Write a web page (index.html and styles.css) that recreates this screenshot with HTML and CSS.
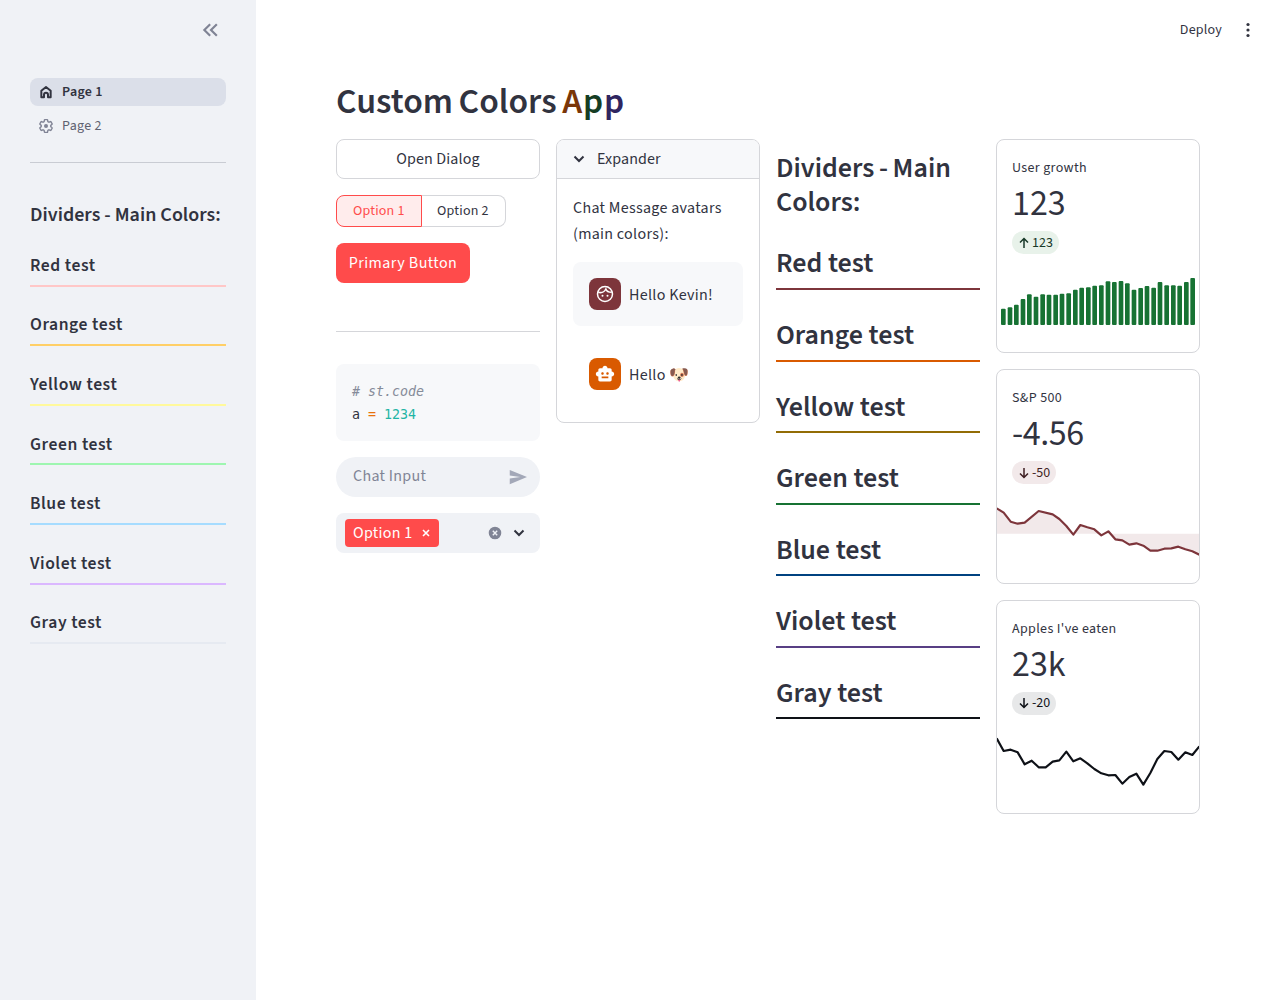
FILE: index.html
```html
<!DOCTYPE html>
<html lang="en">
<head>
    <meta charset="UTF-8">
    <meta name="viewport" content="width=device-width, initial-scale=1.0">
    <title>Custom Colors App</title>
    <link rel="stylesheet" href="styles.css">
</head>
<body>
    <aside class="sidebar">
        <div class="sidebar-top">
            <svg class="collapse-icon" viewBox="0 0 24 24"><path d="M11 5l-7 7 7 7M19 5l-7 7 7 7"/></svg>
        </div>
        <nav class="nav">
            <a class="nav-item active">
                <svg class="nav-icon" viewBox="0 0 24 24"><path class="home" d="M5 20V10l7-5.500L19 10v10h-4v-4a3 3 0 0 0-6 0v4z"/></svg>
                <span>Page 1</span>
            </a>
            <a class="nav-item">
                <svg class="nav-icon" viewBox="0 0 24 24">
                    <path class="gear" d="M19.140 12.940c.04-.3.06-.61.06-.94 0-.32-.02-.64-.07-.94l2.030-1.580c.18-.14.23-.41.12-.61l-1.920-3.320c-.12-.22-.37-.29-.59-.22l-2.390.96c-.5-.38-1.030-.7-1.620-.94l-.36-2.540c-.04-.24-.24-.41-.48-.41h-3.840c-.24 0-.43.17-.47.41l-.36 2.540c-.59.24-1.130.57-1.620.94l-2.390-.96c-.22-.08-.47 0-.59.22L2.740 8.870c-.12.21-.08.47.12.61l2.030 1.580c-.05.3-.09.63-.09.94s.02.64.07.94l-2.030 1.580c-.18.14-.23.41-.12.61l1.920 3.320c.12.22.37.29.59.22l2.390-.96c.5.38 1.030.7 1.620.94l.36 2.540c.05.24.24.41.48.41h3.840c.24 0 .44-.17.47-.41l.36-2.540c.59-.24 1.130-.56 1.620-.94l2.390.96c.22.08.47 0 .59-.22l1.920-3.320c.12-.22.07-.47-.12-.61l-2.010-1.580z"/>
                    <circle class="gear-dot" cx="12" cy="12" r="3"/>
                </svg>
                <span>Page 2</span>
            </a>
        </nav>
        <hr class="sidebar-rule">
        <h3 class="side-title">Dividers - Main Colors:</h3>
        <div class="side-div side-red">Red test</div>
        <div class="side-div side-orange">Orange test</div>
        <div class="side-div side-yellow">Yellow test</div>
        <div class="side-div side-green">Green test</div>
        <div class="side-div side-blue">Blue test</div>
        <div class="side-div side-violet">Violet test</div>
        <div class="side-div side-gray">Gray test</div>
    </aside>

    <main class="main">
        <header class="toolbar">
            <span class="deploy">Deploy</span>
            <svg class="more-icon" viewBox="0 0 4 16"><circle cx="2" cy="2.500" r="1.600"/><circle cx="2" cy="8" r="1.600"/><circle cx="2" cy="13.500" r="1.600"/></svg>
        </header>

        <div class="content">
            <h1 class="title">Custom Colors <span class="c-a">A</span><span class="c-p1">p</span><span class="c-p2">p</span></h1>

            <div class="columns">
                <section class="col">
                    <button class="btn">Open Dialog</button>
                    <div class="segmented">
                        <span class="seg seg-on">Option 1</span>
                        <span class="seg">Option 2</span>
                    </div>
                    <button class="btn-primary">Primary Button</button>
                    <hr class="col-rule">
                    <pre class="code"><span class="code-comment"># st.code</span>
a <span class="code-op">=</span> <span class="code-num">1234</span></pre>
                    <div class="chat-input">
                        <span class="chat-text">Chat Input</span>
                        <svg class="send-icon" viewBox="0 0 24 24"><path d="M1 21.500L24 12 1 2.500v7.500l14 2-14 2z"/></svg>
                    </div>
                    <div class="multiselect">
                        <span class="tag">Option 1 <svg class="tag-x" viewBox="0 0 10 10"><path d="M2 2l6 6M8 2l-6 6"/></svg></span>
                        <span class="ms-icons">
                            <svg class="clear-icon" viewBox="0 0 14 14"><circle cx="7" cy="7" r="7"/><path d="M4.800 4.800l4.400 4.400M9.200 4.800l-4.400 4.400"/></svg>
                            <svg class="chev-icon" viewBox="0 0 12 8"><path d="M1.500 1.500L6 6l4.500-4.500"/></svg>
                        </span>
                    </div>
                </section>

                <section class="col">
                    <div class="expander">
                        <div class="exp-head">
                            <svg class="chev-icon" viewBox="0 0 12 8"><path d="M1.500 1.500L6 6l4.500-4.500"/></svg>
                            <span>Expander</span>
                        </div>
                        <div class="exp-body">
                            <p class="exp-text">Chat Message avatars<br>(main colors):</p>
                            <div class="msg msg-user">
                                <span class="avatar avatar-red">
                                    <svg viewBox="0 0 24 24" class="face"><circle cx="12" cy="12" r="9"/><path d="M4 10c4 1 7 0 9-4 1 3 4 4 7 4"/><circle class="eye" cx="9" cy="14" r="1.200"/><circle class="eye" cx="15" cy="14" r="1.200"/></svg>
                                </span>
                                <span class="msg-text">Hello Kevin!</span>
                            </div>
                            <div class="msg">
                                <span class="avatar avatar-orange">
                                    <svg viewBox="0 0 24 24" class="bot"><path d="M20 9V7c0-1.100-.9-2-2-2h-3c0-1.660-1.340-3-3-3S9 3.340 9 5H6c-1.100 0-2 .9-2 2v2c-1.660 0-3 1.340-3 3s1.340 3 3 3v4c0 1.100.9 2 2 2h12c1.100 0 2-.9 2-2v-4c1.660 0 3-1.340 3-3s-1.340-3-3-3zM7.500 11.500c0-.83.67-1.500 1.500-1.500s1.500.67 1.500 1.500S9.830 13 9 13s-1.500-.67-1.500-1.500zM16 17H8v-2h8v2zm-1-4c-.83 0-1.500-.67-1.500-1.500S14.170 10 15 10s1.500.67 1.500 1.500S15.830 13 15 13z"/></svg>
                                </span>
                                <span class="msg-text">Hello 🐶</span>
                            </div>
                        </div>
                    </div>
                </section>

                <section class="col">
                    <h3 class="main-title">Dividers - Main Colors:</h3>
                    <div class="main-div main-red">Red test</div>
                    <div class="main-div main-orange">Orange test</div>
                    <div class="main-div main-yellow">Yellow test</div>
                    <div class="main-div main-green">Green test</div>
                    <div class="main-div main-blue">Blue test</div>
                    <div class="main-div main-violet">Violet test</div>
                    <div class="main-div main-gray">Gray test</div>
                </section>

                <section class="col">
                    <div class="metric">
                        <div class="metric-label">User growth</div>
                        <div class="metric-value">123</div>
                        <span class="delta delta-up">
                            <svg class="delta-arrow" viewBox="0 0 12 12"><path d="M6 11V2M2 5.500L6 1.500l4 4"/></svg>123
                        </span>
                        <svg class="chart" viewBox="21 388 606 240">
                            <g class="bars">
                                <rect x="33" y="534" width="14" height="49" rx="3"/>
                                <rect x="53" y="530" width="14" height="53" rx="3"/>
                                <rect x="72" y="522" width="14" height="61" rx="3"/>
                                <rect x="92" y="505" width="14" height="78" rx="3"/>
                                <rect x="111" y="491" width="14" height="92" rx="3"/>
                                <rect x="131" y="498" width="14" height="85" rx="3"/>
                                <rect x="151" y="491" width="14" height="92" rx="3"/>
                                <rect x="170" y="492" width="14" height="91" rx="3"/>
                                <rect x="190" y="492" width="14" height="91" rx="3"/>
                                <rect x="209" y="489" width="14" height="94" rx="3"/>
                                <rect x="229" y="488" width="14" height="95" rx="3"/>
                                <rect x="249" y="477" width="14" height="106" rx="3"/>
                                <rect x="268" y="471" width="14" height="112" rx="3"/>
                                <rect x="288" y="470" width="14" height="113" rx="3"/>
                                <rect x="307" y="465" width="14" height="118" rx="3"/>
                                <rect x="327" y="464" width="14" height="119" rx="3"/>
                                <rect x="347" y="452" width="14" height="131" rx="3"/>
                                <rect x="366" y="454" width="14" height="129" rx="3"/>
                                <rect x="386" y="451" width="14" height="132" rx="3"/>
                                <rect x="405" y="458" width="14" height="125" rx="3"/>
                                <rect x="425" y="477" width="14" height="106" rx="3"/>
                                <rect x="445" y="472" width="14" height="111" rx="3"/>
                                <rect x="464" y="466" width="14" height="117" rx="3"/>
                                <rect x="484" y="471" width="14" height="112" rx="3"/>
                                <rect x="503" y="454" width="14" height="129" rx="3"/>
                                <rect x="523" y="464" width="14" height="119" rx="3"/>
                                <rect x="543" y="464" width="14" height="119" rx="3"/>
                                <rect x="562" y="465" width="14" height="118" rx="3"/>
                                <rect x="582" y="454" width="14" height="129" rx="3"/>
                                <rect x="601" y="442" width="14" height="141" rx="3"/>
                            </g>
                        </svg>
                    </div>
                    <div class="metric">
                        <div class="metric-label">S&amp;P 500</div>
                        <div class="metric-value value-tight">-4.56</div>
                        <span class="delta delta-down">
                            <svg class="delta-arrow" viewBox="0 0 12 12"><path d="M6 1v9M2 6.500l4 4 4-4"/></svg>-50
                        </span>
                        <svg class="chart" viewBox="21 373 606 240">
                            <path class="area" d="M20 504V428L41 441 62 468 83 474 104 471 146 436 188 446 208 460 229 481 250 507 271 478 292 485 313 491 334 509 355 497 376 521 397 524 418 537 439 533 460 540 481 555 502 555 523 549 544 548 565 543 586 551 607 557 628 567V504z"/>
                            <path class="line line-red" d="M20 428L41 441 62 468 83 474 104 471 146 436 188 446 208 460 229 481 250 507 271 478 292 485 313 491 334 509 355 497 376 521 397 524 418 537 439 533 460 540 481 555 502 555 523 549 544 548 565 543 586 551 607 557 628 567"/>
                        </svg>
                    </div>
                    <div class="metric">
                        <div class="metric-label">Apples I've eaten</div>
                        <div class="metric-value">23k</div>
                        <span class="delta delta-off">
                            <svg class="delta-arrow" viewBox="0 0 12 12"><path d="M6 1v9M2 6.500l4 4 4-4"/></svg>-20
                        </span>
                        <svg class="chart" viewBox="21 376 606 240">
                            <path class="line line-black" d="M20 428L41 466 62 462 83 470 104 506 125 495 146 515 167 515 188 498 208 494 229 468 250 497 271 488 292 503 313 520 334 533 355 539 376 538 397 564 418 544 439 534 460 567 481 532 502 490 523 466 544 469 565 492 586 470 607 478 628 452"/>
                        </svg>
                    </div>
                </section>
            </div>
        </div>
    </main>
</body>
</html>
```

FILE: styles.css
```css
* {
    box-sizing: border-box;
}
body {
    margin: 0;
    height: 1000px;
    display: flex;
    overflow: hidden;
    background-color: #fff;
    color: #31333f;
    font-family: "Source Sans Pro", "Source Sans 3", "Noto Sans CJK JP", "Noto Sans", sans-serif;
    font-size: 16px;
    letter-spacing: 0.3px;
}
svg {
    display: block;
    flex-shrink: 0;
}

/* sidebar */
.sidebar {
    width: 256px;
    flex-shrink: 0;
    background-color: #f0f2f6;
    padding: 0 30px;
}
.sidebar-top {
    height: 78px;
    display: flex;
    justify-content: flex-end;
    padding: 20px 5px 0 0;
}
.collapse-icon {
    width: 20px;
    height: 20px;
    fill: none;
    stroke: #808495;
    stroke-width: 2.600;
}
.nav {
    display: flex;
    flex-direction: column;
    gap: 6px;
}
.nav-item {
    height: 28px;
    display: flex;
    align-items: center;
    gap: 8px;
    padding-left: 8px;
    border-radius: 8px;
    font-size: 14px;
    line-height: 20px;
    color: #5e6170;
}
.nav-item.active {
    background-color: #dbdfe9;
    color: #31333f;
    font-weight: 600;
}
.nav-icon {
    width: 16px;
    height: 16px;
}
.home {
    fill: none;
    stroke: #31333f;
    stroke-width: 3;
    stroke-linejoin: round;
}
.gear {
    fill: none;
    stroke: #808495;
    stroke-width: 2;
}
.gear-dot {
    fill: #808495;
}
.sidebar-rule {
    margin: 22px 0 0;
    border: none;
    border-top: 1px solid #c9ccd3;
}
.side-title {
    margin: 0;
    padding-top: 37px;
    font-size: 20px;
    line-height: 30px;
    font-weight: 600;
    height: 67px;
    letter-spacing: 0;
}
.side-div {
    height: 59.600px;
    padding-top: 23.900px;
    font-size: 17.600px;
    line-height: 24px;
    font-weight: 600;
    letter-spacing: 0.550px;
}
.side-div::after {
    content: "";
    display: block;
    margin-top: 6.700px;
    height: 2px;
}
.side-red::after { background-color: #ffc7c7; }
.side-orange::after { background-color: #ffcf66; }
.side-yellow::after { background-color: #fff99c; }
.side-green::after { background-color: #9ef6b0; }
.side-blue::after { background-color: #a6dcff; }
.side-violet::after { background-color: #dbb8ff; }
.side-gray::after { background-color: #e6eaf1; }

/* main */
.main {
    flex: 1;
    min-width: 0;
}
.toolbar {
    height: 60px;
    display: flex;
    align-items: center;
    justify-content: flex-end;
    gap: 24px;
    padding-right: 30px;
}
.deploy {
    font-size: 14px;
    letter-spacing: 0.2px;
    color: #31333f;
}
.more-icon {
    width: 4px;
    height: 16px;
    fill: #31333f;
}
.content {
    padding: 0 80px;
}
.title {
    margin: 0;
    height: 79px;
    padding-top: 20px;
    font-size: 35.750px;
    line-height: 44px;
    font-weight: 600;
    letter-spacing: 0;
    word-spacing: -1.500px;
}
.c-a { color: #7a3608; letter-spacing: 0.800px; }
.c-p1 { color: #153d24; letter-spacing: 0.700px; }
.c-p2 { color: #2f2560; }
.columns {
    display: grid;
    grid-template-columns: repeat(4, 1fr);
    gap: 16px;
    align-items: start;
}
.col {
    display: flex;
    flex-direction: column;
    min-width: 0;
}

/* first column */
.btn {
    height: 40px;
    width: 100%;
    background-color: #fff;
    border: 1px solid #d5d6da;
    border-radius: 8px;
    font: inherit;
    letter-spacing: 0.150px;
    color: #31333f;
}
.segmented {
    display: flex;
    margin-top: 16px;
    height: 32px;
}
.seg {
    padding: 0 16px 0 15.500px;
    display: flex;
    align-items: center;
    font-size: 14px;
    letter-spacing: 0.200px;
    background-color: #fff;
    border: 1px solid #d5d6da;
    border-left: none;
    border-radius: 0 8px 8px 0;
}
.seg-on {
    padding: 0 16px;
    background-color: #ffecec;
    border: 1px solid #ff4b4b;
    border-radius: 8px 0 0 8px;
    color: #ff4b4b;
}
.btn-primary {
    margin-top: 16px;
    width: 134px;
    height: 40px;
    background-color: #ff4b4b;
    border: none;
    border-radius: 8px;
    font: inherit;
    letter-spacing: 0.450px;
    color: #fff;
}
.col-rule {
    margin: 48px 0 32px;
    border: none;
    border-top: 1px solid #d5d6da;
}
.code {
    margin: 0;
    height: 77px;
    padding: 16px;
    background-color: #f7f8fa;
    border-radius: 8px;
    font-family: "DejaVu Sans Mono", monospace;
    font-size: 13.300px;
    line-height: 23px;
    letter-spacing: 0;
    color: #31333f;
}
.code-comment {
    color: #858b99;
    font-style: italic;
}
.code-op { color: #e8710a; }
.code-num { color: #1fb5a5; }
.chat-input {
    margin-top: 16px;
    height: 40px;
    display: flex;
    align-items: center;
    justify-content: space-between;
    padding: 0 13px 0 17px;
    background-color: #f0f2f6;
    border-radius: 20px;
    color: #808495;
}
.chat-text {
    margin-bottom: 2px;
}
.send-icon {
    width: 18px;
    height: 18px;
    fill: #a3a8b8;
}
.multiselect {
    margin-top: 16px;
    height: 40px;
    display: flex;
    align-items: center;
    justify-content: space-between;
    padding: 0 15px 0 9px;
    background-color: #f0f2f6;
    border-radius: 8px;
}
.tag {
    height: 28px;
    display: flex;
    align-items: center;
    gap: 8px;
    padding: 0 8px;
    background-color: #ff4b4b;
    border-radius: 4px;
    color: #fff;
}
.tag-x {
    width: 10px;
    height: 10px;
    fill: none;
    stroke: #fff;
    stroke-width: 1.600;
}
.ms-icons {
    display: flex;
    align-items: center;
    gap: 11px;
}
.clear-icon {
    width: 14px;
    height: 14px;
    fill: #808495;
    stroke: #f0f2f6;
    stroke-width: 1.400;
}
.chev-icon {
    width: 12px;
    height: 8px;
    fill: none;
    stroke: #31333f;
    stroke-width: 2;
}

/* expander */
.expander {
    border: 1px solid #d5d6da;
    border-radius: 8px;
    overflow: hidden;
    height: 284px;
}
.exp-head {
    height: 39px;
    display: flex;
    align-items: center;
    gap: 12px;
    padding-left: 16px;
    background-color: #f7f8fa;
    border-bottom: 1px solid #d5d6da;
    letter-spacing: 0.1px;
}
.exp-body {
    padding: 16px;
}
.exp-text {
    margin: 0;
    line-height: 26px;
}
.msg {
    margin-top: 16px;
    height: 64px;
    display: flex;
    align-items: center;
    gap: 8px;
    padding-left: 16px;
    border-radius: 8px;
}
.msg-user {
    margin-top: 15px;
    background-color: #f7f8fa;
}
.msg-text {
    margin-top: 2px;
}
.avatar {
    width: 32px;
    height: 32px;
    display: flex;
    align-items: center;
    justify-content: center;
    border-radius: 8px;
}
.avatar-red { background-color: #7d353b; }
.avatar-orange { background-color: #d95a00; }
.face {
    width: 20px;
    height: 20px;
    fill: none;
    stroke: #fff;
    stroke-width: 1.800;
}
.eye {
    fill: #fff;
    stroke: none;
}
.bot {
    width: 20px;
    height: 20px;
    fill: #fff;
}

/* dividers in the main area */
.main-title {
    margin: 0;
    padding-top: 12px;
    height: 94px;
    font-size: 28px;
    line-height: 34px;
    font-weight: 600;
    letter-spacing: 0;
    word-spacing: -1px;
}
.main-div {
    height: 71.500px;
    padding-top: 12.500px;
    font-size: 28px;
    line-height: 36px;
    font-weight: 600;
    letter-spacing: 0;
}
.main-red {
    padding-top: 11.500px;
}
.main-red::after {
    margin-top: 7.500px;
}
.main-div::after {
    content: "";
    display: block;
    margin-top: 6.500px;
    height: 2px;
}
.main-red::after { background-color: #7d353b; margin-top: 7.500px; }
.main-orange::after { background-color: #d95a00; }
.main-yellow::after { background-color: #926c05; }
.main-green::after { background-color: #177233; }
.main-blue::after { background-color: #004280; }
.main-violet::after { background-color: #583f84; }
.main-gray::after { background-color: #0e1117; }

/* metric cards */
.metric {
    height: 214.200px;
    padding-top: 17px;
    border: 1px solid #d5d6da;
    border-radius: 8px;
    margin-bottom: 16.200px;
    overflow: hidden;
}
.metric-label {
    padding-left: 15px;
    font-size: 14px;
    line-height: 22px;
    letter-spacing: 0.350px;
}
.metric-value {
    padding-left: 15px;
    height: 50px;
    font-size: 36px;
    line-height: 50px;
    letter-spacing: 0;
}
.value-tight {
    letter-spacing: -0.400px;
}
.delta {
    display: inline-flex;
    align-items: center;
    gap: 2px;
    margin: 2px 0 0 15px;
    height: 23px;
    padding: 0 6px;
    border-radius: 12px;
    font-size: 14px;
    letter-spacing: 0;
    vertical-align: top;
}
.delta-up { background-color: #e8f2ea; color: #173928; }
.delta-down { background-color: #f2e9ea; color: #3e1e22; }
.delta-off { background-color: #e7e8e9; color: #0e1117; }
.delta-arrow {
    width: 12px;
    height: 12px;
    fill: none;
    stroke: currentColor;
    stroke-width: 1.500;
}
.chart {
    width: 202px;
    height: 80px;
    margin-top: 6px;
}
.bars {
    fill: #177233;
}
.area {
    fill: #f2e9ea;
}
.line {
    fill: none;
    stroke-width: 6.500;
    stroke-linejoin: round;
}
.line-red { stroke: #7d353b; }
.line-black { stroke: #0e1117; }
```
